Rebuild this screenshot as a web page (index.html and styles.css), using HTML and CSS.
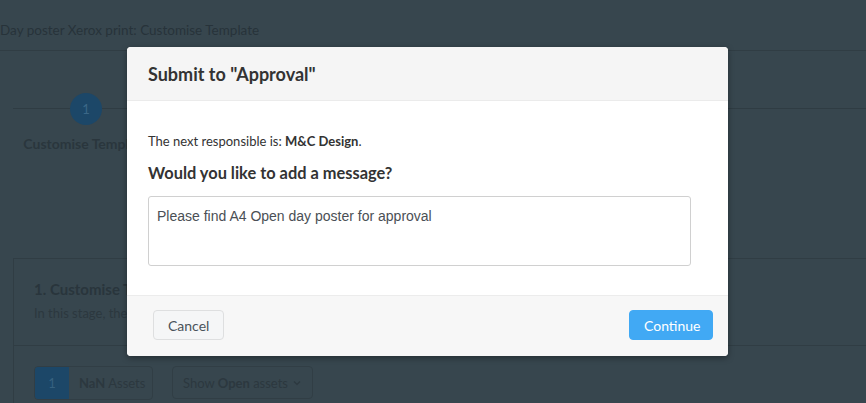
FILE: index.html
```html
<!DOCTYPE html>
<html>
<head>
<meta charset="utf-8">
<link rel="stylesheet" href="styles.css">
</head>
<body>
<div class="page">
  <div class="topbar"><span class="page-title">Day poster Xerox print: Customise Template</span></div>
  <div class="stepper">
    <div class="step">
      <div class="step-circle">1</div>
      <div class="step-label">Customise Template</div>
    </div>
  </div>
  <div class="card">
    <div class="card-head">
      <div class="card-title">1. Customise Template</div>
      <div class="card-desc">In this stage, the designer customises the template.</div>
    </div>
    <div class="card-tools">
      <div class="count-group">
        <span class="count-num">1</span>
        <span class="count-label"><span><b>NaN</b> Assets</span></span>
      </div>
      <div class="filter-btn"><span>Show <b>Open</b> assets</span> <svg class="chev" width="8" height="6" viewBox="0 0 8 6"><path d="M1 1.5 L4 4.5 L7 1.5" fill="none" stroke="currentColor" stroke-width="1.2"/></svg></div>
    </div>
  </div>
</div>

<div class="modal">
  <div class="modal-header">
    <h3 class="modal-title">Submit to "Approval"</h3>
  </div>
  <div class="modal-body">
    <p class="next-resp">The next responsible is: <b>M&amp;C Design</b>.</p>
    <h4 class="msg-title">Would you like to add a message?</h4>
    <div class="textarea">Please find A4 Open day poster for approval</div>
  </div>
  <div class="modal-footer">
    <button class="btn btn-default">Cancel</button>
    <button class="btn btn-primary">Continue</button>
  </div>
</div>
</body>
</html>
```

FILE: styles.css
```css
* { box-sizing: border-box; }
html, body { margin: 0; padding: 0; }
body {
  width: 866px;
  height: 403px;
  overflow: hidden;
  background: #37464e;
  font-family: "Lato", "Source Sans Pro", sans-serif;
  position: relative;
}
.page { display: flex; flex-direction: column; }
.topbar {
  height: 51px;
  border-bottom: 1px solid #303d44;
  display: flex;
  align-items: center;
  padding-top: 10px;
}
.page-title { font-size: 13.5px; color: #27333a; }
.stepper {
  position: relative;
  height: 207px;
  padding-top: 42px;
  padding-left: 15px;
}
.stepper::before {
  content: "";
  display: block;
  position: absolute;
  left: 13px; right: 0; top: 57px;
  border-top: 1px solid #2f3c43;
}
.step {
  position: relative;
  display: flex;
  flex-direction: column;
  align-items: center;
  width: 142px;
}
.step-circle {
  width: 32px; height: 32px;
  border-radius: 50%;
  background: #1c4768;
  color: #3b6787;
  font-size: 13px;
  display: flex; align-items: center; justify-content: center;
}
.step-label { margin-top: 10px; font-weight: 700; font-size: 14px; color: #2a363d; white-space: nowrap; }
.card {
  margin-left: 13px;
  border: 1px solid #303d44;
  border-right: none;
  height: 160px;
}
.card-head {
  height: 87px;
  border-bottom: 1px solid #303d44;
  padding: 21px 20px 0;
}
.card-title { font-size: 15px; font-weight: 700; color: #29353c; }
.card-desc { font-size: 13px; color: #2c383f; margin-top: 7px; white-space: nowrap; }
.card-tools {
  display: flex;
  gap: 19px;
  padding: 20px 20px 0;
}
.count-group {
  display: flex;
  height: 34px;
  border: 1px solid #313e45;
  border-radius: 4px;
  width: 119px;
}
.count-num {
  width: 34px;
  background: #1c4768;
  color: #36617f;
  border-radius: 3px 0 0 3px;
  display: flex; align-items: center; justify-content: center;
  font-size: 13px;
}
.count-label { display: flex; align-items: center; padding-left: 10px; font-size: 13px; color: #2c383f; white-space: pre; }
.filter-btn {
  height: 33px;
  width: 141px;
  border: 1px solid #313e45;
  border-radius: 4px;
  display: flex; align-items: center;
  padding-left: 10px;
  font-size: 13px;
  color: #2c383f;
  gap: 4px;
  white-space: pre;
}
.chev { margin-left: 1px; }

.modal {
  position: absolute;
  left: 127px; top: 47px;
  width: 601px; height: 309px;
  background: #fff;
  border-radius: 4px;
  box-shadow: 0 2px 6px rgba(0,0,0,0.35);
  display: flex; flex-direction: column;
  overflow: hidden;
}
.modal-header {
  height: 54px;
  background: #f5f5f5;
  border-bottom: 1px solid #ebebeb;
  padding: 0 21px;
  display: flex; align-items: center;
}
.modal-title { margin: 0; font-size: 18px; font-weight: 700; color: #333; }
.modal-body {
  flex: 1;
  padding: 32px 21px 0;
}
.next-resp { margin: 0; font-size: 13px; color: #333; }
.next-resp b { font-weight: 700; }
.msg-title { margin: 14px 0 0; font-size: 16.4px; font-weight: 700; color: #333; }
.textarea {
  margin-top: 14px;
  width: 543px;
  height: 70px;
  border: 1px solid #d0d0d0;
  border-radius: 3px;
  padding: 11px 8px 0;
  font-family: "Liberation Sans", Arial, sans-serif;
  font-size: 14px;
  color: #4a4f55;
}
.modal-footer {
  height: 61px;
  background: #f7f7f7;
  border-top: 1px solid #ececec;
  display: flex; align-items: center; justify-content: space-between;
  padding: 0 15px 2px 26px;
}
.btn {
  height: 30px;
  border-radius: 4px;
  font-family: "Lato", sans-serif;
  font-size: 14px;
  padding: 0 14px;
  cursor: pointer;
}
.btn-default { width: 71px; background: #f5f6f7; border: 1px solid #dedfe0; color: #4a535a; }
.btn-primary { width: 84px; background: #41a9f4; border: 1px solid #41a9f4; color: #fff; }
```
